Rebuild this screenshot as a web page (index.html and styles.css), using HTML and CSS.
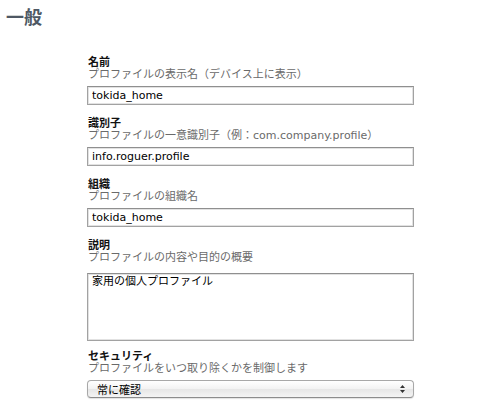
FILE: index.html
```html
<!DOCTYPE html>
<html lang="ja">
<head>
<meta charset="utf-8">
<title>一般</title>
<link rel="stylesheet" href="styles.css">
</head>
<body>
<h1 class="title">一般</h1>
<form class="form">
  <div class="field">
    <div class="label">名前</div>
    <div class="desc">プロファイルの表示名（デバイス上に表示）</div>
    <input class="input" type="text" value="tokida_home">
  </div>
  <div class="field">
    <div class="label">識別子</div>
    <div class="desc">プロファイルの一意識別子（例：com.company.profile）</div>
    <input class="input" type="text" value="info.roguer.profile">
  </div>
  <div class="field">
    <div class="label">組織</div>
    <div class="desc">プロファイルの組織名</div>
    <input class="input" type="text" value="tokida_home">
  </div>
  <div class="field field-area">
    <div class="label">説明</div>
    <div class="desc">プロファイルの内容や目的の概要</div>
    <textarea class="area">家用の個人プロファイル</textarea>
  </div>
  <div class="field">
    <div class="label">セキュリティ</div>
    <div class="desc">プロファイルをいつ取り除くかを制御します</div>
    <div class="popup">
      <span class="popup-text">常に確認</span>
      <svg class="popup-arrows" width="7" height="10" viewBox="0 0 7 10"><path d="M3.5 1 L6 4 H1 Z M3.5 9 L6 6 H1 Z" fill="#333"/></svg>
    </div>
  </div>
</form>
</body>
</html>
```
FILE: styles.css
```css
html, body {
  margin: 0;
  padding: 0;
  background: #ffffff;
}
body {
  font-family: "DejaVu Sans", "Noto Sans CJK JP", sans-serif;
  font-size: 11px;
  color: #000;
}
.title {
  margin: 0;
  padding: 5px 0 0 6px;
  font-family: "Noto Sans CJK JP", sans-serif;
  font-size: 18px;
  line-height: 22px;
  font-weight: 700;
  color: #4e5864;
}
.form {
  margin: 27px 0 0 87px;
  width: 327px;
  display: flex;
  flex-direction: column;
}
.field {
  display: flex;
  flex-direction: column;
  margin-bottom: 10px;
}
.field-area {
  margin-bottom: 7px;
}
.label {
  font-family: "Noto Sans CJK JP", sans-serif;
  font-weight: 700;
  font-size: 11px;
  line-height: 14px;
  padding-left: 1px;
  color: #111;
}
.desc {
  font-family: "DejaVu Sans", "Noto Sans CJK JP", sans-serif;
  font-size: 11px;
  line-height: 14px;
  padding-left: 1px;
  color: #6a6a6a;
}
.input {
  box-sizing: border-box;
  margin: 4px 0 0 0;
  width: 327px;
  height: 19px;
  padding: 0 4px;
  border: 1px solid #a2a2a2;
  border-top-color: #8f8f8f;
  box-shadow: inset 0 0 0 1px #e2e2e2;
  font-family: "DejaVu Sans", "Noto Sans CJK JP", sans-serif;
  font-size: 11px;
  color: #000;
  background: #fff;
  outline: none;
}
.area {
  box-sizing: border-box;
  margin: 8px 0 0 0;
  width: 327px;
  height: 68px;
  padding: 1px 4px;
  border: 1px solid #a2a2a2;
  border-top-color: #8f8f8f;
  box-shadow: inset 0 0 0 1px #e2e2e2;
  font-family: "DejaVu Sans", "Noto Sans CJK JP", sans-serif;
  font-size: 11px;
  line-height: 13px;
  color: #000;
  resize: none;
  display: block;
  outline: none;
}
.popup {
  position: relative;
  box-sizing: border-box;
  margin-top: 4px;
  width: 327px;
  height: 18px;
  border: 1px solid #a8a8a8;
  border-bottom-color: #8c8c8c;
  border-radius: 4px;
  background: linear-gradient(#ffffff, #f2f2f2 50%, #e6e6e6 51%, #f4f4f4);
  box-shadow: 0 1px 1px rgba(0, 0, 0, 0.12);
  display: flex;
  align-items: center;
  padding-left: 9px;
}
.popup-text {
  font-family: "Noto Sans CJK JP", sans-serif;
  font-size: 11px;
  line-height: 14px;
  color: #000;
}
.popup-arrows {
  position: absolute;
  right: 7px;
  top: 3px;
}
```
